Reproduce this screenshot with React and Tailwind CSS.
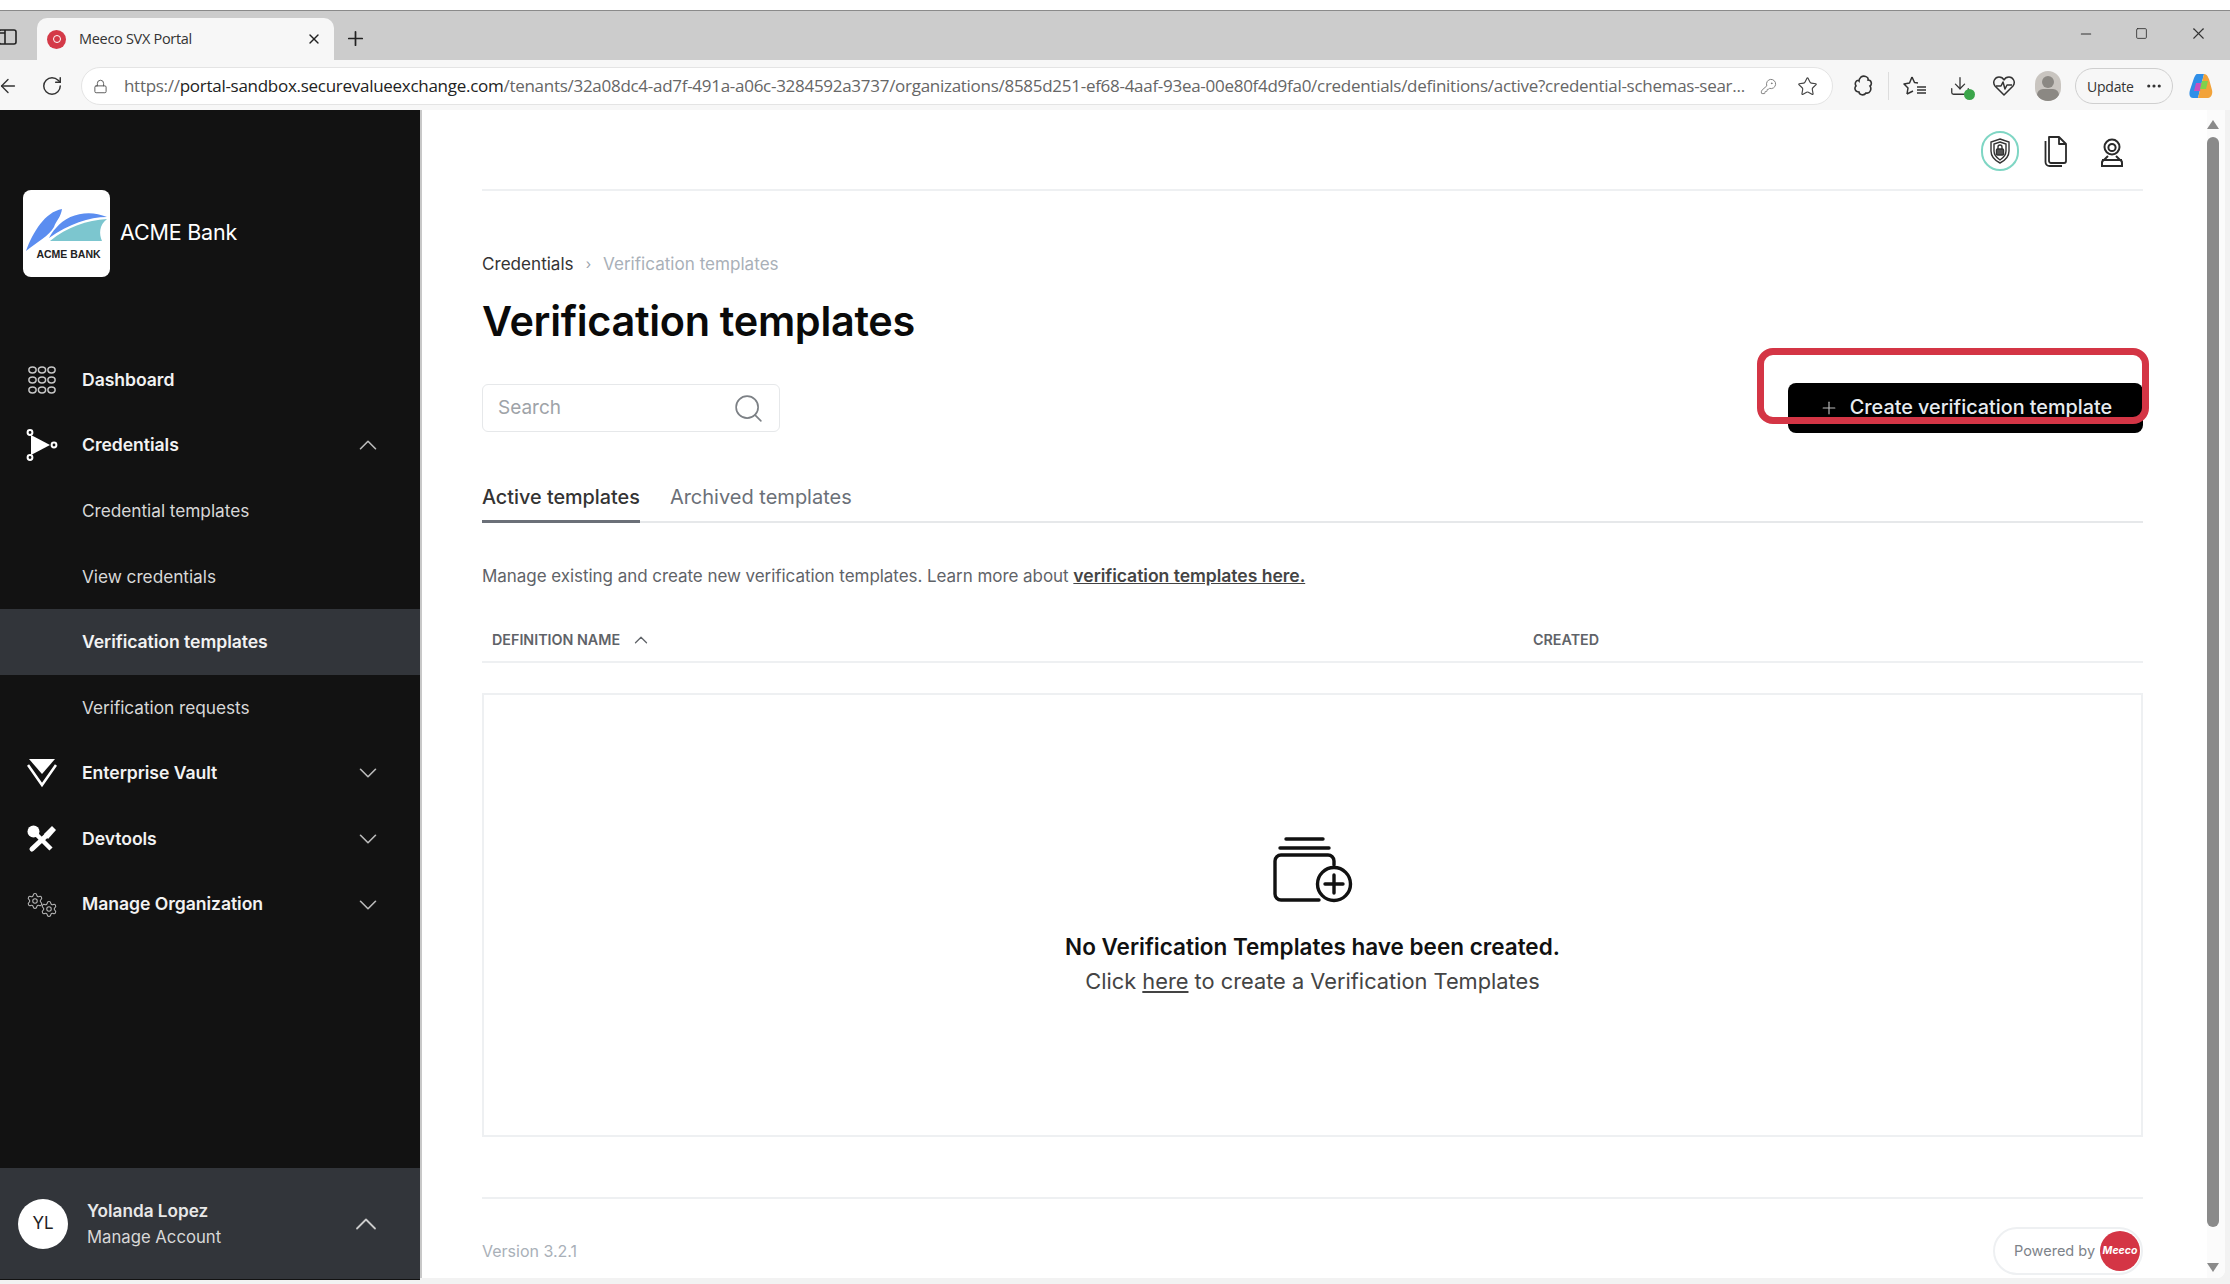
import React from "react";
import { ArrowLeft, RotateCw, Lock, Star, KeyRound, Plus, X, Minus, Square, Search, ChevronUp, ChevronDown, MoreHorizontal, Download, Settings } from "lucide-react";

const Nav = ({ icon, label, chevron, sub, active }) => (
  <div className={`h-[65.6px] flex items-center pr-[37px] shrink-0 ${active ? "bg-[#32353a]" : ""}`}>
    <div className="w-[82px] flex justify-center pl-[2px] shrink-0">{icon}</div>
    <span className={`flex-1 tracking-[-0.05px] ${sub && !active ? "text-[17.3px] font-normal text-[#d8d8d8]" : "text-[17.6px] font-semibold text-[#f2f2f2]"}`}>{label}</span>
    {chevron === "up" && <ChevronUp className="w-[30px] h-[30px] text-[#bbbbbb]" strokeWidth={1.3} />}
    {chevron === "down" && <ChevronDown className="w-[30px] h-[30px] text-[#bbbbbb]" strokeWidth={1.3} />}
  </div>
);

const DashIcon = () => (
  <svg width="28" height="28" viewBox="0 0 28 28" fill="none" stroke="#c8c8c8" strokeWidth="1.5">
    {[4, 14, 24].flatMap((y) => [4.5, 14, 23.5].map((x) => <ellipse key={`${x}-${y}`} cx={x} cy={y} rx="3.6" ry="2.9" />))}
  </svg>
);
const CredIcon = () => (
  <svg width="32" height="32" viewBox="0 0 32 32" fill="#fff">
    <path d="M5 6 L24 16 L5 26 Z" />
    <g fill="none" stroke="#fff" strokeWidth="2">
      <circle cx="4" cy="3.5" r="2.4" /><circle cx="4" cy="28.5" r="2.4" /><circle cx="28" cy="16" r="2.4" />
    </g>
  </svg>
);
const VaultIcon = () => (
  <svg width="30" height="30" viewBox="0 0 30 30" fill="none">
    <path d="M2 1 H28 L15 16 Z" fill="#fff" />
    <path d="M1 7 L15 27 L29 7" stroke="#fff" strokeWidth="2.6" />
  </svg>
);
const ToolIcon = () => (
  <svg width="30" height="28" viewBox="0 0 30 28" fill="none" stroke="#fff">
    <path d="M9 9 L24 24" strokeWidth="4.5" />
    <circle cx="6.5" cy="6.5" r="6" fill="#fff" stroke="none" />
    <path d="M20 10 L5 24" strokeWidth="5" strokeLinecap="round" />
    <path d="M17 9 L25 1 L29 5 L21 14 Z" fill="#fff" stroke="none" />
  </svg>
);
const GearsIcon = () => (
  <div className="relative w-[32px] h-[26px]">
    <Settings className="absolute left-0 top-0 w-[18px] h-[18px] text-[#b8b8b8]" strokeWidth={1.4} />
    <Settings className="absolute right-0 bottom-0 w-[18px] h-[18px] text-[#b8b8b8]" strokeWidth={1.4} />
  </div>
);

const AcmeLogo = () => (
  <div className="w-[87px] h-[87px] bg-white rounded-[8px] flex flex-col items-center overflow-hidden">
    <svg width="87" height="48" viewBox="0 0 87 48" className="mt-[14px] shrink-0">
      <path d="M3 47 C10 28 22 8 39 5 C38 13 33 17 31 23 C26 32 14 38 3 47 Z" fill="#5b8df0" />
      <path d="M33 24 C44 10 66 5 84 13 C66 13 46 20 26 34 C28 30 30 27 33 24 Z" fill="#5b8df0" />
      <path d="M27 37 C44 23 64 16 84 15 C76 21 76 30 79 37 Z" fill="#7cc6cf" />
    </svg>
    <span className="text-[10.5px] leading-[10px] font-bold text-[#222] font-['Liberation_Sans',sans-serif] mt-[-3px] pl-[4px] whitespace-nowrap">ACME BANK</span>
  </div>
);

const ShieldIcon = () => (
  <div className="w-[38px] h-[40px] rounded-full border-2 border-[#7fd6c4] flex items-center justify-center">
    <svg width="22" height="26" viewBox="0 0 22 26" fill="none" stroke="#333" strokeWidth="1.4">
      <path d="M11 1 L20 4 V13 C20 19 15 23 11 25 C7 23 2 19 2 13 V4 Z" />
      <path d="M11 4 L17 6 V13 C17 17 14 20 11 22 C8 20 5 17 5 13 V6 Z" />
      <rect x="7.5" y="11" width="7" height="6" rx="1" fill="#555" />
      <path d="M9 11 V9 a2 2 0 0 1 4 0 V11" />
    </svg>
  </div>
);
const DocsIcon = () => (
  <svg width="26" height="32" viewBox="0 0 26 32" fill="none" stroke="#2a2a2a" strokeWidth="1.8" strokeLinejoin="round">
    <path d="M7 2 H17 L24 9 V26 a2 2 0 0 1 -2 2 H9 a2 2 0 0 1 -2 -2 Z" />
    <path d="M17 2 V9 H24" />
    <path d="M3.5 6 V27 a4 4 0 0 0 4 4 H20" />
  </svg>
);
const UserIcon = () => (
  <svg width="26" height="30" viewBox="0 0 26 30" fill="none" stroke="#2a2a2a" strokeWidth="2">
    <circle cx="13" cy="9" r="7.5" />
    <circle cx="13" cy="9.5" r="3.6" />
    <path d="M9 18 L5 22 a3 3 0 0 0 -2 3 V28 H23 V25 a3 3 0 0 0 -2 -3 L17 18" />
    <path d="M3 22 H23" />
  </svg>
);
const EmptyIcon = () => (
  <svg width="80" height="66" viewBox="0 0 80 66" fill="none" stroke="#111" strokeWidth="3.4" strokeLinecap="round">
    <path d="M13 2 H50" />
    <path d="M7 11 H56" />
    <path d="M61 28 V24 a6 6 0 0 0 -6 -6 H8 a6 6 0 0 0 -6 6 V57 a6 6 0 0 0 6 6 H46" />
    <circle cx="61" cy="47" r="16.5" />
    <path d="M61 38 V56 M52 47 H70" />
  </svg>
);

const Extension = () => (
  <svg width="20" height="22" viewBox="0 0 20 22" fill="none" stroke="#333" strokeWidth="1.6">
    <path d="M8 2 C11 0 16 2 15 5 C19 5 19 10 17 11 C19 14 17 19 13 18 C11 21 6 20 6 17 C2 17 1 13 3 11 C1 8 4 4 6 6 C6 4 7 3 8 2 Z" />
  </svg>
);
const FavIcon = () => (
  <svg width="24" height="22" viewBox="0 0 24 22" fill="none" stroke="#333" strokeWidth="1.5" strokeLinejoin="round">
    <path d="M9 2 L11.5 7.5 L15 8 M4 19 L5 13 L1 9 L6.5 8 L9 2 M4 19 L10 16" />
    <path d="M14 12 H23 M14 15 H23 M14 18 H23" />
  </svg>
);
const HeartIcon = () => (
  <svg width="24" height="22" viewBox="0 0 24 22" fill="none" stroke="#333" strokeWidth="1.5" strokeLinejoin="round">
    <path d="M12 20 L3 11 C0 7 3 2 7 2 C9 2 11 3 12 5 C13 3 15 2 17 2 C21 2 24 7 21 11 Z" />
    <path d="M4 11 H9 L11 7 L13 14 L15 10 H20" />
  </svg>
);
const Copilot = () => (
  <svg width="26" height="28" viewBox="0 0 26 26">
    <path d="M9 1 H16 L10 25 H5 C1 25 1 20 2 17 L6 5 C7 3 8 1 9 1 Z" fill="#2f8fe8" />
    <path d="M16 1 C19 1 20 4 21 6 L24 17 C25 21 23 25 20 25 H10 L16 1 Z" fill="#f2a33a" />
    <path d="M8 10 H14 L12 18 H6 Z" fill="#c850c0" />
    <path d="M14 8 H20 L18 16 H12 Z" fill="#7fd14d" />
  </svg>
);

export default function App() {
  return (
    <div className="w-[2230px] h-[1284px] flex flex-col bg-[#f2f2f2] overflow-hidden relative font-['Inter',sans-serif]">
      <div className="h-[11px] bg-white border-b border-[#8a8a8a] shrink-0" />

      {/* tab strip */}
      <div className="h-[49px] bg-[#cccccc] flex items-end shrink-0 relative font-['Open_Sans',sans-serif]">
        <div className="w-[37px] h-[42px] flex items-center justify-start pb-[4px]">
          <svg width="17" height="18" viewBox="0 0 17 18" fill="none" stroke="#222" strokeWidth="1.6">
            <rect x="-1" y="2" width="17" height="14" rx="2" />
            <path d="M5 2 V16 M-1 5 H5" />
          </svg>
        </div>
        <div className="w-[297px] h-[42px] bg-[#f7f7f7] rounded-t-[10px] flex items-center pl-[10px] pr-[12px]">
          <div className="w-[19px] h-[19px] rounded-full bg-[#d43a48] shrink-0 flex items-center justify-center">
            <div className="w-[8px] h-[8px] rounded-full border border-white" />
          </div>
          <span className="ml-[13px] flex-1 text-[14.5px] text-[#333] tracking-[-0.3px]">Meeco SVX Portal</span>
          <X className="w-[16px] h-[16px] text-[#222]" strokeWidth={2} />
        </div>
        <Plus className="w-[23px] h-[23px] ml-[10px] mb-[10px] text-[#222]" strokeWidth={1.8} />
        <div className="ml-auto flex items-center gap-[41px] pr-[22px] pb-[17px] text-[#333]">
          <Minus className="w-[16px] h-[16px]" strokeWidth={1.6} />
          <Square className="w-[13px] h-[15px]" strokeWidth={1.6} />
          <X className="w-[19px] h-[19px]" strokeWidth={1.4} />
        </div>
      </div>

      {/* toolbar */}
      <div className="h-[50px] pt-[2px] bg-[#f7f7f7] flex items-center shrink-0 font-['Open_Sans',sans-serif] relative">
        <ArrowLeft className="w-[22px] h-[22px] ml-[-3px] text-[#333]" strokeWidth={1.5} />
        <RotateCw className="w-[22px] h-[22px] ml-[22px] text-[#333]" strokeWidth={1.6} />
        <div className="ml-[18px] w-[1752px] h-[38px] bg-white border border-[#e4e4e4] rounded-full flex items-center pl-[11px] pr-[14px]">
          <Lock className="w-[15px] h-[17px] text-[#555]" strokeWidth={1.5} />
          <span className="ml-[16px] w-[1628px] text-[17px] text-[#666] whitespace-nowrap overflow-hidden tracking-[-0.28px]">
            https://<span className="text-[#222]">portal-sandbox.securevalueexchange.com</span>/tenants/32a08dc4-ad7f-491a-a06c-3284592a3737/organizations/8585d251-ef68-4aaf-93ea-00e80f4d9fa0/credentials/definitions/active?credential-schemas-sear...
          </span>
          <KeyRound className="w-[17px] h-[17px] ml-[11px] text-[#777] shrink-0" strokeWidth={1.3} />
          <Star className="w-[21px] h-[21px] ml-[20px] text-[#444] shrink-0" strokeWidth={1.3} />
        </div>
        <div className="ml-[20px] flex items-center shrink-0"><Extension /></div>
        <div className="w-px h-[28px] bg-[#dddddd] ml-[15px]" />
        <div className="ml-[14px]"><FavIcon /></div>
        <div className="relative ml-[21px] w-[24px] h-[26px] flex items-center justify-center">
          <Download className="w-[22px] h-[22px] text-[#333]" strokeWidth={1.4} />
          <span className="absolute right-[-3px] bottom-[-1px] w-[11px] h-[11px] rounded-full bg-[#3ba54a]" />
        </div>
        <div className="ml-[20px]"><HeartIcon /></div>
        <div className="ml-[19px] w-[26px] h-[30px] rounded-full bg-[#c9c5c0] overflow-hidden flex flex-col items-center">
          <div className="w-[12px] h-[13px] rounded-full bg-[#8b8883] mt-[5px]" />
          <div className="w-[22px] h-[14px] rounded-full bg-[#8b8883] mt-[1px]" />
        </div>
        <div className="ml-[14px] w-[98px] h-[36px] border border-[#cfcfcf] rounded-full flex items-center justify-between pl-[11px] pr-[9px]">
          <span className="text-[14px] text-[#333] tracking-[-0.2px]">Update</span>
          <MoreHorizontal className="w-[18px] h-[18px] text-[#333]" strokeWidth={2.2} />
        </div>
        <div className="ml-[15px]"><Copilot /></div>
      </div>

      {/* body */}
      <div className="h-[1170px] flex shrink-0">
        <aside className="w-[420px] bg-[#121212] flex flex-col shrink-0">
          <div className="flex items-center pl-[23px] pt-[80px] gap-[10px]">
            <AcmeLogo />
            <span className="text-[21.5px] text-white font-normal tracking-[-0.2px] mt-[-2px]">ACME Bank</span>
          </div>
          <nav className="mt-[70px] flex flex-col">
            <Nav icon={<DashIcon />} label="Dashboard" />
            <Nav icon={<CredIcon />} label="Credentials" chevron="up" />
            <Nav label="Credential templates" sub />
            <Nav label="View credentials" sub />
            <Nav label="Verification templates" sub active />
            <Nav label="Verification requests" sub />
            <Nav icon={<VaultIcon />} label="Enterprise Vault" chevron="down" />
            <Nav icon={<ToolIcon />} label="Devtools" chevron="down" />
            <Nav icon={<GearsIcon />} label="Manage Organization" chevron="down" />
          </nav>
          <div className="mt-auto h-[111px] mb-[1px] bg-[#32353a] flex items-center pl-[18px] pr-[36px]">
            <div className="w-[50px] h-[50px] rounded-full bg-white text-[#222] text-[17px] flex items-center justify-center shrink-0">YL</div>
            <div className="ml-[19px] flex-1 flex flex-col gap-[4px] leading-[22px]">
              <span className="text-[17.2px] font-semibold text-[#e8e8e8]">Yolanda Lopez</span>
              <span className="text-[16.7px] text-[#d8d8d8]">Manage Account</span>
            </div>
            <ChevronUp className="w-[36px] h-[36px] text-[#cccccc]" strokeWidth={1.2} />
          </div>
        </aside>

        <div className="w-[2px] bg-[#c8c8c8] h-[1168px] shrink-0" />

        <main className="w-[1803px] h-[1168px] bg-white rounded-br-[8px] flex shrink-0">
          <div className="w-[1785px] pl-[60px] pr-[64px] flex flex-col shrink-0">
            <div className="h-[81px] border-b-2 border-[#eef0f2] flex items-center justify-end shrink-0">
              <div className="flex items-center pr-[18px] pt-[3px]">
                <ShieldIcon />
                <div className="ml-[23px]"><DocsIcon /></div>
                <div className="ml-[31px] mt-[3px]"><UserIcon /></div>
              </div>
            </div>
            <div className="mt-[61px] flex items-center text-[17.1px] leading-[24px] shrink-0">
              <span className="text-[#333]">Credentials</span>
              <span className="mx-[12px] text-[#9aa2ab] text-[14px]">›</span>
              <span className="text-[#a9b0b8]">Verification templates</span>
            </div>
            <h1 className="mt-[20px] text-[41.4px] leading-[50px] font-semibold text-[#0a0a0a] tracking-[-0.3px] shrink-0">Verification templates</h1>
            <div className="mt-[38px] h-[49px] flex justify-between items-start shrink-0">
              <div className="w-[298px] h-[48px] border border-[#e6e8ea] rounded-[6px] flex items-center justify-between pl-[15px] pr-[14px]">
                <span className="text-[19px] text-[#9ea3a8]">Search</span>
                <Search className="w-[33px] h-[33px] text-[#7c8085]" strokeWidth={1.2} />
              </div>
              <button className="w-[355px] h-[50px] mt-[-1px] bg-black rounded-[8px] text-[#e8ecf0] flex items-center justify-center gap-[11px] text-[19.8px] font-medium">
                <Plus className="w-[20px] h-[20px] text-[#bbbbbb]" strokeWidth={1.4} />
                Create verification template
              </button>
            </div>
            <div className="mt-[50px] h-[40px] border-b-2 border-[#e6e8ea] flex leading-[28px] shrink-0">
              <div className="h-[40px] border-b-[3px] border-[#6b7078] text-[19.8px] text-[#333] font-medium">Active templates</div>
              <div className="ml-[30px] text-[20px] text-[#6b7078]">Archived templates</div>
            </div>
            <p className="mt-[41px] text-[17px] leading-[24px] text-[#5f6368] shrink-0 tracking-[-0.05px]">
              Manage existing and create new verification templates. Learn more about <a className="text-[17.6px] font-semibold text-[#444] underline">verification templates here.</a>
            </p>
            <div className="mt-[31px] h-[44px] border-b-2 border-[#eef0f2] flex items-center text-[14.3px] font-semibold text-[#5f6368] shrink-0">
              <div className="w-[1051px] pl-[10px] flex items-center gap-[10px]">
                DEFINITION NAME
                <ChevronUp className="w-[22px] h-[22px]" strokeWidth={1.4} />
              </div>
              <div>CREATED</div>
            </div>
            <div className="mt-[30px] h-[444px] border-2 border-[#eef0f2] flex flex-col items-center shrink-0">
              <div className="mt-[142px]"><EmptyIcon /></div>
              <div className="mt-[28px] text-[22.5px] leading-[32px] font-semibold text-[#111]">No Verification Templates have been created.</div>
              <div className="mt-[2px] text-[21.8px] leading-[32px] text-[#444]">Click <a className="underline">here</a> to create a Verification Templates</div>
            </div>
            <div className="mt-[60px] border-t-2 border-[#eef0f2] flex items-center justify-between pt-[28px] shrink-0">
              <span className="text-[16px] text-[#a9b0b8]">Version 3.2.1</span>
              <div className="w-[150px] h-[48px] border-2 border-[#eef0f2] rounded-full flex items-center pl-[19px] justify-between">
                <span className="text-[14.5px] text-[#7d838a] whitespace-nowrap">Powered by</span>
                <div className="w-[40px] h-[40px] rounded-full bg-[#d43545] flex items-center justify-center mr-[1px] shrink-0">
                  <span className="text-[10.5px] italic font-bold text-white">Meeco</span>
                </div>
              </div>
            </div>
          </div>
          <div className="w-[18px] flex flex-col items-center bg-[#fbfbfb] rounded-br-[8px] shrink-0 pt-[10px] pb-[6px] pr-[6px]">
            <span className="w-0 h-0 border-x-[6px] border-x-transparent border-b-[9px] border-b-[#8a8a8a]" />
            <div className="mt-[8px] w-[12px] h-[1090px] bg-[#8a8a8a] rounded-full" />
            <span className="mt-auto w-0 h-0 border-x-[6px] border-x-transparent border-t-[9px] border-t-[#8a8a8a]" />
          </div>
        </main>
      </div>

      {/* red annotation */}
      <div className="absolute left-[1757px] top-[348px] w-[392px] h-[76px] border-[7px] border-[#d43545] rounded-[16px] pointer-events-none" />
    </div>
  );
}
